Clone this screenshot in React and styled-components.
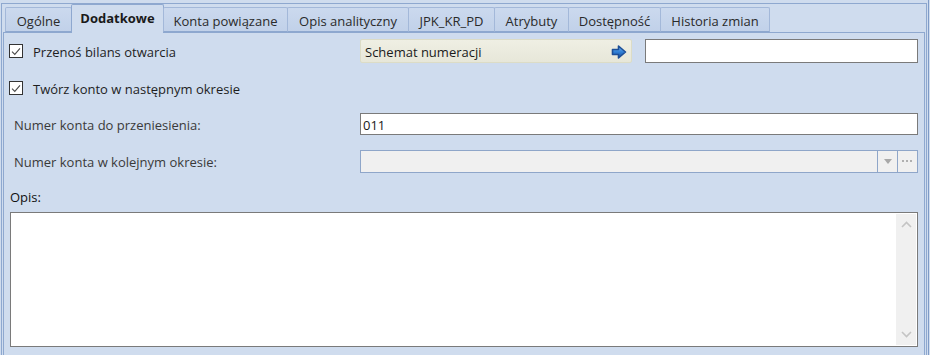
import React from "react";
import styled, { createGlobalStyle } from "styled-components";

const GlobalStyle = createGlobalStyle`
    html, body {
        margin: 0;
        padding: 0;
        background: #cfdcee;
    }
    body {
        font-family: "Open Sans", "Noto Sans", sans-serif;
        font-size: 13px;
        color: #1e1e1e;
    }
`

const Window = styled.div`
    width: 928px;
    height: 355px;
    border-right: 1px solid #7f9bc7;
    overflow: hidden;
    display: flex;
    flex-direction: column;
`
const Frame = styled.div`
    margin-top: 3px;
    margin-left: 1px;
    width: 924px;
    flex: 1;
    border: 1px solid #8ea8cf;
    border-bottom: none;
    display: flex;
    flex-direction: column;
`
const TabStrip = styled.div`
    display: flex;
    align-items: flex-end;
    height: 28px;
    padding-left: 2px;
    position: relative;
    z-index: 1;
`
const Tab = styled.div`
    box-sizing: border-box;
    width: ${props => props.w}px;
    height: ${props => props.active ? 29 : 25}px;
    margin-left: -1px;
    margin-bottom: ${props => props.active ? -1 : 0}px;
    display: flex;
    align-items: center;
    justify-content: center;
    padding-bottom: ${props => props.active ? 3 : 0}px;
    padding-top: ${props => props.active ? 0 : 2}px;
    border: 1px solid ${props => props.active ? '#8ea8cf' : '#a3b8d9'};
    border-bottom: ${props => props.active ? 'none' : '1px solid #8ea8cf'};
    border-radius: 2px 2px 0 0;
    background: ${props => props.active ? '#cfdcee' : 'linear-gradient(#cbd9ee, #c1d1e9)'};
    font-weight: ${props => props.active ? 700 : 400};
    color: ${props => props.active ? '#1a1a1a' : '#2a2a2a'};
    white-space: nowrap;
    &:first-child {
        margin-left: 1px;
    }
`
const Page = styled.div`
    flex: 1;
    margin: 0 1px;
    border: 1px solid #8ea8cf;
    border-bottom: none;
    padding: 6px 6px 0 5px;
    display: flex;
    flex-direction: column;
`
const Row = styled.div`
    display: grid;
    grid-template-columns: 351px 1fr;
    align-items: center;
    height: ${props => props.h}px;
    margin-top: ${props => props.mt || 0}px;
`
const CheckLabel = styled.label`
    display: flex;
    align-items: center;
    gap: 10px;
    color: #1e1e1e;
`
const LabelText = styled.span`
    padding-top: 2px;
`
const Box = styled.span`
    box-sizing: border-box;
    width: 14px;
    height: 14px;
    border: 1px solid #333333;
    background: #ffffff;
    display: flex;
    align-items: center;
    justify-content: center;
`
const FieldLabel = styled.div`
    padding: 1px 0 0 5px;
    color: #3a3a3a;
`
const Right = styled.div`
    display: flex;
    gap: 13px;
    height: 100%;
`
const SchemeButton = styled.div`
    box-sizing: border-box;
    width: 272px;
    height: 100%;
    display: flex;
    align-items: center;
    justify-content: space-between;
    padding: 1px 3px 0 4px;
    background: linear-gradient(#efefe4, #e7e7d9);
    border: 1px solid #dcdcc6;
    border-radius: 2px;
    color: #1a1a1a;
`
const TextInput = styled.div`
    box-sizing: border-box;
    flex: 1;
    height: 100%;
    border: 1px solid #7a7a7a;
    background: #ffffff;
    padding: 1px 0 0 2px;
    display: flex;
    align-items: center;
    color: #1a1a1a;
`
const Combo = styled.div`
    box-sizing: border-box;
    flex: 1;
    height: 100%;
    border: 1px solid #8fa6c9;
    background: #f0f0f0;
    display: flex;
`
const ComboText = styled.div`
    flex: 1;
`
const ComboButton = styled.div`
    width: 19px;
    border-left: 1px solid #8fa6c9;
    display: flex;
    align-items: center;
    justify-content: center;
`
const OpisLabel = styled.div`
    margin-top: 13px;
    padding: 1px 0 0 1px;
    height: 20px;
    display: flex;
    align-items: center;
    color: #111111;
`
const Memo = styled.div`
    box-sizing: border-box;
    margin: 5px 0 0 1px;
    height: 135px;
    border: 1px solid #7a7a7a;
    background: #ffffff;
    display: flex;
    padding: 1px;
`
const MemoText = styled.div`
    flex: 1;
`
const ScrollBar = styled.div`
    width: 20px;
    background: #f0f0f0;
    display: flex;
    flex-direction: column;
    justify-content: space-between;
    align-items: center;
    padding: 7px 0;
`

function Check() {
    return (
        <Box>
            <svg width="10" height="9" viewBox="0 0 10 9">
                <path d="M1 4.6 L3.8 7.4 L9 1.4" fill="none" stroke="#4a4a4a" strokeWidth="1.1"/>
            </svg>
        </Box>
    )
}

function ArrowIcon() {
    return (
        <svg width="18" height="16" viewBox="0 0 18 16">
            <defs>
                <linearGradient id="arr" x1="0" y1="0" x2="0" y2="1">
                    <stop offset="0" stopColor="#7ab8f0"/>
                    <stop offset="0.5" stopColor="#2f7fd6"/>
                    <stop offset="1" stopColor="#1a4f9c"/>
                </linearGradient>
            </defs>
            <path d="M2.5 5.5 L8.5 5.5 L8.5 2 L15.5 8 L8.5 14 L8.5 10.5 L2.5 10.5 Z" fill="url(#arr)" stroke="#1d4f98" strokeWidth="1.6" strokeLinejoin="round"/>
        </svg>
    )
}

function Chevron({ up }) {
    return (
        <svg width="11" height="7" viewBox="0 0 11 7">
            <path d={up ? "M1 6 L5.5 1.5 L10 6" : "M1 1 L5.5 5.5 L10 1"} fill="none" stroke="#c4c4c4" strokeWidth="1.6"/>
        </svg>
    )
}

const tabs = [
    { label: 'Ogólne', w: 67 },
    { label: 'Dodatkowe', w: 93, active: true },
    { label: 'Konta powiązane', w: 125 },
    { label: 'Opis analityczny', w: 122 },
    { label: 'JPK_KR_PD', w: 87 },
    { label: 'Atrybuty', w: 75 },
    { label: 'Dostępność', w: 93 },
    { label: 'Historia zmian', w: 110 },
]

export default function App() {
    return (
        <Window>
            <GlobalStyle/>
            <Frame>
                <TabStrip>
                    {tabs.map(t => <Tab key={t.label} w={t.w} active={t.active}>{t.label}</Tab>)}
                </TabStrip>
                <Page>
                    <Row h={24}>
                        <CheckLabel><Check/><LabelText>Przenoś bilans otwarcia</LabelText></CheckLabel>
                        <Right>
                            <SchemeButton>Schemat numeracji<ArrowIcon/></SchemeButton>
                            <TextInput/>
                        </Right>
                    </Row>
                    <Row h={24} mt={13}>
                        <CheckLabel><Check/><LabelText>Twórz konto w następnym okresie</LabelText></CheckLabel>
                    </Row>
                    <Row h={22} mt={13}>
                        <FieldLabel>Numer konta do przeniesienia:</FieldLabel>
                        <Right>
                            <TextInput>011</TextInput>
                        </Right>
                    </Row>
                    <Row h={23} mt={15}>
                        <FieldLabel>Numer konta w kolejnym okresie:</FieldLabel>
                        <Right>
                            <Combo>
                                <ComboText/>
                                <ComboButton>
                                    <svg width="8" height="5" viewBox="0 0 8 5"><path d="M0 0 L8 0 L4 5 Z" fill="#a8a8a8"/></svg>
                                </ComboButton>
                                <ComboButton>
                                    <svg width="11" height="3" viewBox="0 0 11 3">
                                        <rect x="0" y="0" width="2" height="2" fill="#b0b0b0"/>
                                        <rect x="4" y="0" width="2" height="2" fill="#b0b0b0"/>
                                        <rect x="8" y="0" width="2" height="2" fill="#b0b0b0"/>
                                    </svg>
                                </ComboButton>
                            </Combo>
                        </Right>
                    </Row>
                    <OpisLabel>Opis:</OpisLabel>
                    <Memo>
                        <MemoText/>
                        <ScrollBar>
                            <Chevron up/>
                            <Chevron/>
                        </ScrollBar>
                    </Memo>
                </Page>
            </Frame>
        </Window>
    )
}
